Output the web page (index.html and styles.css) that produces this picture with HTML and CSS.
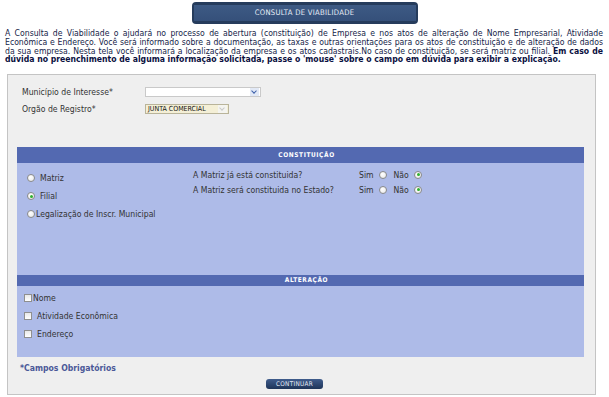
FILE: index.html
```html
<!DOCTYPE html>
<html lang="pt-BR">
  <head>
    <meta charset="UTF-8" />
    <title>Consulta de Viabilidade</title>
    <link rel="stylesheet" href="styles.css">
  </head>
  <body>
    <div class="title-bar"><span>CONSULTA DE VIABILIDADE</span></div>

    <p class="intro">
      A Consulta de Viabilidade o ajudará no processo de abertura (constituição) de Empresa e nos atos de alteração de Nome Empresarial, Atividade Econômica e Endereço. Você será informado sobre a documentação, as taxas e outras orientações para os atos de constituição e de alteração de dados da sua empresa. Nesta tela você informará a localização da empresa e os atos cadastrais.No caso de constituição, se será matriz ou filial. <b>Em caso de dúvida no preenchimento de alguma informação solicitada, passe o 'mouse' sobre o campo em dúvida para exibir a explicação.</b>
    </p>

    <div class="main-box">
      <div class="field-row">
        <label class="field-label">Município de Interesse*</label>
        <div class="select select-city"><span></span><i class="arrow"></i></div>
      </div>
      <div class="field-row">
        <label class="field-label">Orgão de Registro*</label>
        <div class="select select-org"><span>JUNTA COMERCIAL</span><i class="arrow disabled"></i></div>
      </div>

      <div class="panel">
        <div class="panel-head">CONSTITUIÇÃO</div>
        <div class="panel-body const-body">
          <div class="const-left">
            <div class="opt"><i class="radio"></i><span>Matriz</span></div>
            <div class="opt"><i class="radio checked"></i><span>Filial</span></div>
            <div class="opt opt-tight"><i class="radio"></i><span>Legalização de Inscr. Municipal</span></div>
          </div>
          <div class="const-right">
            <div class="question">
              <span class="q-text">A Matriz já está constituida?</span>
              <span class="answers">Sim <i class="radio"></i> Não <i class="radio checked"></i></span>
            </div>
            <div class="question">
              <span class="q-text">A Matriz será constituida no Estado?</span>
              <span class="answers">Sim <i class="radio"></i> Não <i class="radio checked"></i></span>
            </div>
          </div>
        </div>

        <div class="panel-head panel-head-thin">ALTERAÇÃO</div>
        <div class="panel-body alt-body">
          <div class="opt opt-tight"><i class="check"></i><span>Nome</span></div>
          <div class="opt"><i class="check"></i><span>Atividade Econômica</span></div>
          <div class="opt"><i class="check"></i><span>Endereço</span></div>
        </div>
      </div>

      <div class="required">*Campos Obrigatórios</div>
      <div class="actions"><button class="btn">CONTINUAR</button></div>
    </div>
  </body>
</html>
```

FILE: styles.css
```css
* {
  margin: 0;
  padding: 0;
  box-sizing: border-box;
}

body {
  background: #ffffff;
  font-family: "DejaVu Sans Condensed", "Liberation Sans", sans-serif;
  font-size: 8.6px;
  color: #333333;
}

.title-bar {
  width: 226px;
  height: 22px;
  margin: 2px auto 0;
  border-radius: 4px;
  background: #263c5c;
  padding: 3px 2px;
}

.title-bar span {
  display: block;
  height: 16px;
  line-height: 16px;
  background: linear-gradient(#3d5a84, #35507a);
  color: #e8eef8;
  text-align: center;
  font-size: 7.6px;
  letter-spacing: 0.3px;
}

.intro {
  margin: 5px 6px 0 5px;
  line-height: 8.8px;
  text-align: justify;
  color: #141c48;
}

.intro b {
  color: #0a1040;
}

.main-box {
  margin: 10px 13px 0 7px;
  height: 321px;
  border: 1px solid #c4c4c4;
  background: #efefef;
  padding: 8px 11px 0 9px;
}

.field-row {
  display: flex;
  align-items: center;
  height: 17px;
  padding-left: 5px;
}

.field-label {
  width: 123px;
}

.select {
  display: flex;
  align-items: center;
  height: 10px;
  border: 1px solid #c9c9c9;
  background: #ffffff;
}

.select span {
  flex: 1;
  padding-left: 2px;
  font-size: 7px;
  color: #111111;
}

.select-city {
  width: 116px;
}

.select-org {
  width: 84px;
  background: #f4efd6;
  border-color: #b9b49a;
}

.arrow {
  width: 9px;
  height: 8px;
  margin-right: 1px;
  background: #e2e9f6;
  position: relative;
}

.arrow::after {
  content: "";
  position: absolute;
  left: 2px;
  top: 1px;
  width: 3px;
  height: 3px;
  border-right: 1.3px solid #3b5ea8;
  border-bottom: 1.3px solid #3b5ea8;
  transform: rotate(45deg);
}

.arrow.disabled {
  background: #f4f4f0;
}

.arrow.disabled::after {
  border-color: #c8c8c8;
}

.panel {
  margin-top: 30px;
}

.panel-head {
  height: 16px;
  line-height: 16px;
  background: #5369b1;
  color: #ffffff;
  font-weight: bold;
  font-size: 6.5px;
  letter-spacing: 0.6px;
  text-align: center;
  padding-left: 12px;
}

.panel-head-thin {
  height: 11px;
  line-height: 11px;
}

.panel-body {
  background: #aebbe8;
}

.const-body {
  height: 112px;
  display: flex;
  padding: 3px 0 0 10px;
}

.const-left {
  width: 166px;
  padding-top: 3px;
}

.opt {
  display: flex;
  align-items: center;
  height: 18px;
}

.opt .radio,
.opt .check {
  margin-right: 5px;
}

.opt-tight .radio,
.opt-tight .check {
  margin-right: 1px;
}

.radio {
  display: inline-block;
  width: 8px;
  height: 8px;
  border-radius: 50%;
  border: 1px solid #8a8a8a;
  background: radial-gradient(circle at 40% 35%, #ffffff, #e6e6e6);
  vertical-align: -1px;
  position: relative;
}

.radio.checked::after {
  content: "";
  position: absolute;
  left: 1.5px;
  top: 1.5px;
  width: 3px;
  height: 3px;
  border-radius: 50%;
  background: #2fb02f;
}

.check {
  display: inline-block;
  width: 8px;
  height: 8px;
  border: 1px solid #8f8f8f;
  background: linear-gradient(#e8e8e8, #ffffff);
}

.const-right {
  padding-top: 1px;
}

.question {
  display: flex;
  height: 15px;
  align-items: center;
}

.q-text {
  width: 166px;
}

.answers .radio {
  margin: 0 4px 0 3px;
}

.alt-body {
  height: 71px;
  padding: 3px 0 0 7px;
}

.required {
  margin: 6px 0 0 3px;
  color: #4a5898;
  font-weight: bold;
}

.actions {
  text-align: center;
  margin-top: 5px;
  padding-right: 12px;
}

.btn {
  width: 57px;
  height: 10px;
  border: none;
  border-radius: 3px;
  background: linear-gradient(#3f5c8c, #1e3458);
  color: #e6ecf6;
  font-family: inherit;
  font-size: 6.4px;
  letter-spacing: 0.3px;
  line-height: 10px;
}
```
